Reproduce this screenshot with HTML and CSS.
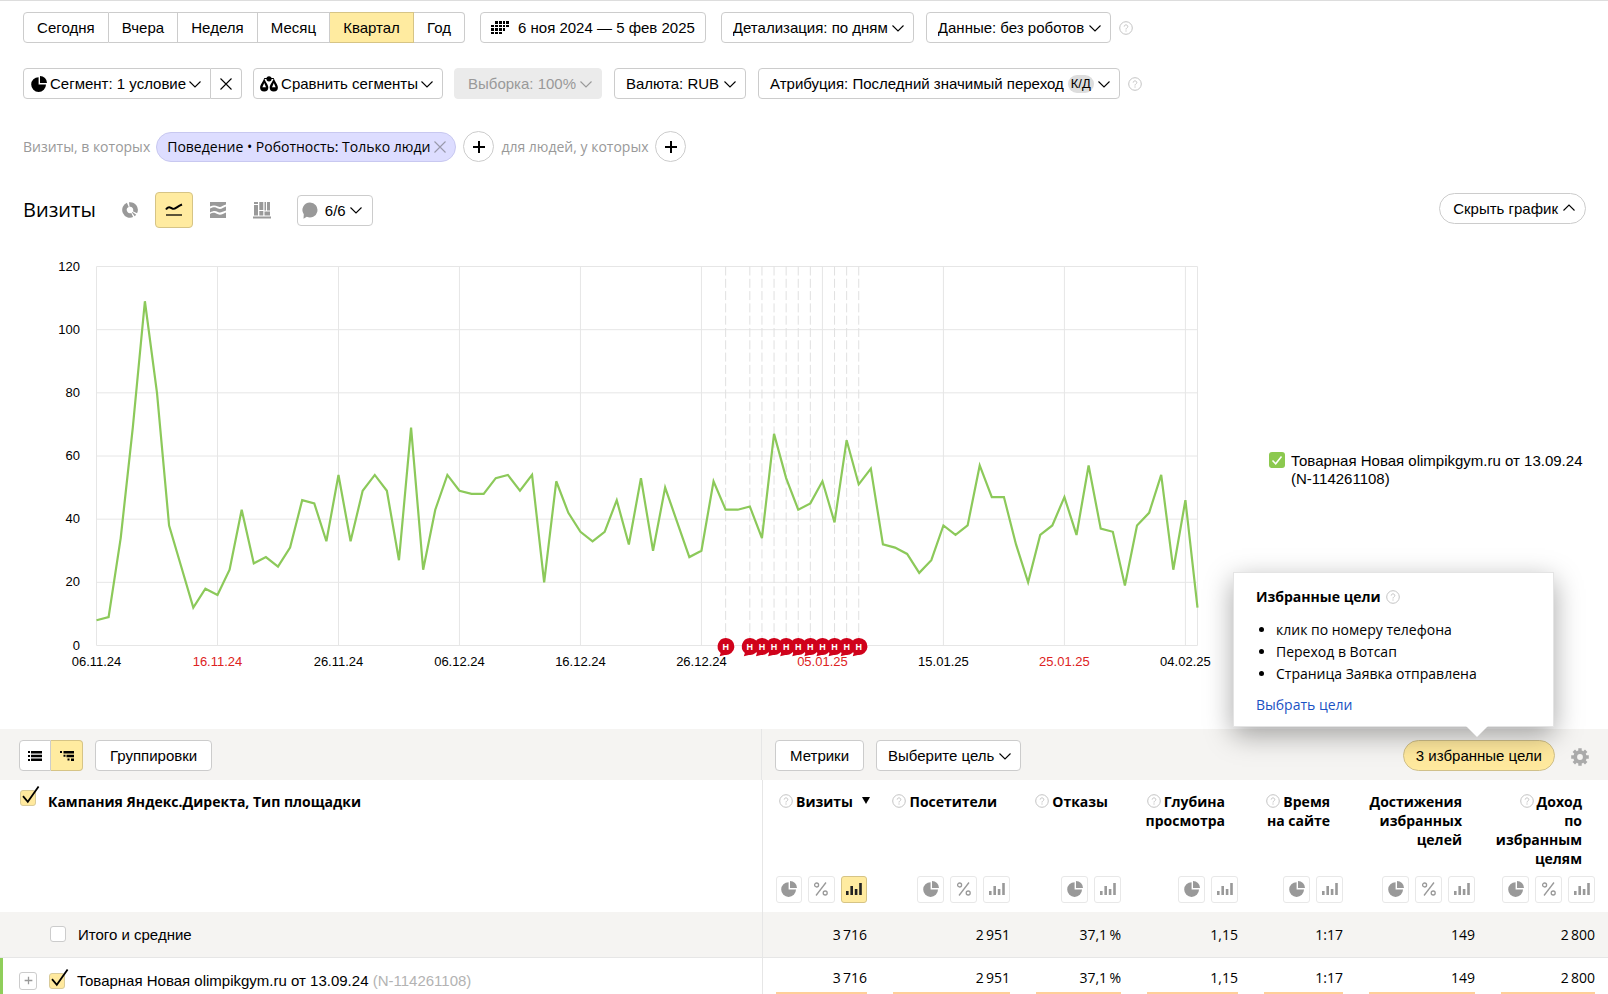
FILE: index.html
```
<!DOCTYPE html>
<html lang="ru">
<head>
<meta charset="utf-8">
<title>Визиты</title>
<link rel="stylesheet" href="styles.css">
</head>
<body>
<svg class="sprite" aria-hidden="true">
  <symbol id="i-down" viewBox="0 0 12 12"><path d="M.5 3.500 6 9 11.500 3.500" fill="none" stroke="currentColor" stroke-width="1.100"/></symbol>
  <symbol id="i-up" viewBox="0 0 12 12"><path d="M.5 8.500 6 3 11.500 8.500" fill="none" stroke="currentColor" stroke-width="1.100"/></symbol>
  <symbol id="i-x" viewBox="0 0 12 12"><path d="M.5.5l11 11M11.5.5l-11 11" fill="none" stroke="currentColor" stroke-width="1.1"/></symbol>
  <symbol id="i-help" viewBox="0 0 14 14"><circle cx="7" cy="7" r="6.3" fill="none" stroke="currentColor"/><path d="M5.2 5.6c0-2.3 3.6-2.2 3.6 0 0 1.3-1.8 1.3-1.8 2.9M7 9.4v1.2" fill="none" stroke="currentColor"/></symbol>
  <symbol id="i-pie" viewBox="0 0 16 16"><path d="M7.600 1.2V8.600H15A7.400 7.400 0 1 1 7.600 1.2z" fill="currentColor"/><path d="M9 0a7 7 0 0 1 7 7H9z" fill="currentColor"/></symbol>
  <symbol id="i-percent" viewBox="0 0 16 16"><g fill="none" stroke="currentColor" stroke-width="1.3"><path d="M13 1.5l-10 13"/><circle cx="3.6" cy="4" r="2"/><circle cx="12.2" cy="12" r="2"/></g></symbol>
  <symbol id="i-bars" viewBox="0 0 18 14"><path d="M1 9h2.6v4H1zM5.4 4H8v9H5.4zM9.8 7h2.6v6H9.8zM14.2 1h2.6v12h-2.6z" fill="currentColor"/></symbol>
  <symbol id="i-tick" viewBox="0 0 16 16"><path d="M3 6.2 7.8 11.8 18.6-3.4" fill="none" stroke="#000" stroke-width="1.8"/></symbol>
  <symbol id="i-plus" viewBox="0 0 14 14"><path d="M7 1v12M1 7h12" fill="none" stroke="currentColor" stroke-width="2"/></symbol>
</svg>

<header class="filters">
  <div class="row">
    <div class="group period">
      <button>Сегодня</button><button>Вчера</button><button>Неделя</button><button>Месяц</button><button class="on">Квартал</button><button>Год</button>
    </div>
    <button class="btn date">
      <svg width="18" height="14" viewBox="0 0 18 14"><path d="M4 0h3v3H4zM8 0h3v3H8zM12 0h2v3h-2zM15 0h3v3h-3zM0 4h3v2H0zM4 4h3v2H4zM8 4h3v2H8zM12 4h2v2h-2zM15 4h3v2h-3zM0 7h3v3H0zM4 7h3v3H4zM8 7h3v3H8zM12 7h2v3h-2zM0 11h3v2H0zM4 11h3v2H4zM8 11h3v2H8z"/></svg>
      6 ноя 2024 — 5 фев 2025
    </button>
    <div class="pair">
      <span class="select detail"><select aria-label="Детализация"><option>Детализация: по дням</option></select><svg><use href="#i-down"/></svg></span>
      <span class="select robots"><select aria-label="Данные"><option>Данные: без роботов</option></select><svg><use href="#i-down"/></svg></span>
    </div>
    <svg class="help"><use href="#i-help"/></svg>
  </div>

  <div class="row second">
    <div class="group segment">
      <button><svg class="i16"><use href="#i-pie"/></svg><span>Сегмент: 1 условие</span><svg class="i12"><use href="#i-down"/></svg></button>
      <button aria-label="Сбросить"><svg class="i12"><use href="#i-x"/></svg></button>
    </div>
    <button class="btn compare">
      <svg width="18" height="16" viewBox="0 0 18 16"><circle cx="9" cy="2.800" r="2.600"/><path d="M4.200 2.500h9.600" stroke="#000"/><path fill-rule="evenodd" d="M4.200 2C5 5.500 8.300 8.500 8.300 11.500a4.100 4.100 0 0 1-8.200 0C.1 8.500 3.400 5.500 4.200 2zm0 5L2.400 11.200h3.600zM13.800 2c.8 3.500 4.100 6.500 4.100 9.500a4.100 4.100 0 0 1-8.200 0C9.700 8.500 13 5.500 13.800 2zm0 5L12 11.200h3.600z"/></svg>
      <span>Сравнить сегменты</span><svg class="i12"><use href="#i-down"/></svg>
    </button>
    <span class="select sample"><select aria-label="Выборка" disabled><option>Выборка: 100%</option></select><svg><use href="#i-down"/></svg></span>
    <span class="select currency"><select aria-label="Валюта"><option>Валюта: RUB</option></select><svg><use href="#i-down"/></svg></span>
    <button class="btn attribution"><span>Атрибуция: Последний значимый переход</span><span class="tag">К/Д</span><svg class="i12"><use href="#i-down"/></svg></button>
    <svg class="help"><use href="#i-help"/></svg>
  </div>

  <div class="row third">
    <span class="muted first">Визиты, в которых</span>
    <span class="chip">Поведение • Роботность: Только люди <button aria-label="Убрать"><svg class="i12"><use href="#i-x"/></svg></button></span>
    <button class="round" aria-label="Добавить условие"><svg><use href="#i-plus"/></svg></button>
    <span class="muted">для людей, у которых</span>
    <button class="round" aria-label="Добавить условие для людей"><svg><use href="#i-plus"/></svg></button>
  </div>
</header>

<section class="titlebar">
  <h1>Визиты</h1>
  <div class="views">
    <button aria-label="Круговая"><svg width="16" height="16" viewBox="0 0 16 16"><g fill="none" stroke="#999" stroke-width="4.600"><path d="M5.800 2.900A5.500 5.500 0 0 0 10.200 13"/><path d="M7.300 2.500A5.500 5.500 0 0 1 13 10.300"/><path d="M11.300 12.400A5.500 5.500 0 0 0 12.400 11.300"/></g></svg></button>
    <button class="on" aria-label="Линии"><svg width="18" height="14" viewBox="0 0 18 14"><path d="M1 6.500C3 3 5 4 8 5.800 10 6.500 12 3.500 17 1.500" fill="none" stroke="#000" stroke-width="2"/><path d="M1 12h16" stroke="#000" stroke-width="1.300"/></svg></button>
    <button aria-label="Области"><svg width="16" height="16" viewBox="0 0 16 16"><path d="M0 0h16v2.500C12 3.500 11 6 8 4.500 5 3 3 3 0 4.500zM0 6.500c4-2 5-1.500 8 0 3 1.300 5-.8 8-2v4c-4 1-5 3-8 1.500s-5-1-8 .5zM0 12c4-2 5-1 8 .3 3 1.200 5-.8 8-1.800V16H0z" fill="#999"/></svg></button>
    <button aria-label="Столбцы"><svg width="18" height="18" viewBox="0 0 18 18"><path d="M0 15.500h18v2H0zM1 1h4v2H1zM1 4h4v10.500H1zM6.300 1h4v8h-4zM6.300 10h4v4.500h-4zM11.500 1h1.500v8.500h-1.500zM11.500 10.500h5.500v4h-5.500zM14 1h3v8.500h-3z" fill="#999"/></svg></button>
  </div>
  <button class="btn notes"><svg width="16" height="17" viewBox="0 0 16 17"><path d="M8 .5a7.500 7.500 0 1 1-3.200 14.300L1.500 16.800l.3-4.500A7.500 7.500 0 0 1 8 .5z" fill="#999"/></svg><span>6/6</span><svg class="i12"><use href="#i-down"/></svg></button>
  <button class="btn hide">Скрыть график <svg class="i12"><use href="#i-up"/></svg></button>
</section>

<section class="chart">
  <svg id="plot" viewBox="0 0 1232 456" role="img" aria-label="График визитов"></svg>
  <label class="legend">
    <span class="green"><input type="checkbox" checked><svg viewBox="0 0 16 16"><path d="M3.500 8.500l3.200 3.300L12.500 4.500" fill="none" stroke="#fff" stroke-width="1.500"/></svg></span>
    <span>Товарная Новая olimpikgym.ru от 13.09.24<br>(N-114261108)</span>
  </label>
</section>

<section class="report">
  <div class="toolbar">
    <div class="tools-left">
      <div class="group tree">
        <button aria-label="Список"><svg width="14" height="10" viewBox="0 0 14 10"><path d="M0 0h2v2H0zM0 4h2v2H0zM0 8h2v2H0zM3 0h11v2.500H3zM3 3.700h11v2.500H3zM3 7.500h11V10H3z"/></svg></button>
        <button class="on" aria-label="Дерево"><svg width="14" height="10" viewBox="0 0 14 10"><path d="M0 0h2v2H0zM3.500 0H14v2.500H3.500zM3.500 3.700h2v2h-2zM6.500 3.700H14v2.500H6.500zM7.500 7.500h2v2h-2zM11 7.500h3V10h-3z"/></svg></button>
      </div>
      <button class="btn text">Группировки</button>
    </div>
    <div class="tools-right">
      <button class="btn text">Метрики</button>
      <span class="select goal"><select aria-label="Цель"><option>Выберите цель</option></select><svg><use href="#i-down"/></svg></span>
      <div class="goals">
        <button class="btn goals-btn">3 избранные цели</button>
        <div class="popover">
          <h2>Избранные цели <svg class="help"><use href="#i-help"/></svg></h2>
          <ul><li>клик по номеру телефона</li><li>Переход в Вотсап</li><li>Страница Заявка отправлена</li></ul>
          <a href="#">Выбрать цели</a>
        </div>
      </div>
      <button class="gear" aria-label="Настройки"><svg width="18" height="18" viewBox="0 0 18 18"><circle cx="9" cy="9" r="4.800" fill="none" stroke="#aaa" stroke-width="3.800"/><path d="M9 .2v3M9 14.800v3M.2 9h3M14.800 9h3M2.800 2.800l2 2M13.200 13.200l2 2M2.800 15.200l2-2M13.200 4.800l2-2" stroke="#aaa" stroke-width="3.400"/></svg></button>
    </div>
  </div>

  <table>
    <colgroup><col><col class="c118"><col class="c143"><col class="c111"><col class="c117"><col class="c105"><col class="c132"><col class="c120"></colgroup>
    <thead>
      <tr class="names">
        <th rowspan="2" class="dim"><div class="namecell"><span class="check"><input type="checkbox" checked aria-label="Выбрать все"><svg><use href="#i-tick"/></svg></span>Кампания Яндекс.Директа, Тип площадки</div></th>
        <th class="sorted"><svg class="help"><use href="#i-help"/></svg>Визиты<span class="arrow"></span></th>
        <th><svg class="help"><use href="#i-help"/></svg>Посетители</th>
        <th><svg class="help"><use href="#i-help"/></svg>Отказы</th>
        <th><svg class="help"><use href="#i-help"/></svg>Глубина<br>просмотра</th>
        <th><svg class="help"><use href="#i-help"/></svg>Время<br>на сайте</th>
        <th>Достижения<br>избранных<br>целей</th>
        <th><svg class="help"><use href="#i-help"/></svg>Доход<br>по<br>избранным<br>целям</th>
      </tr>
      <tr class="modes">
        <td><div><button aria-label="Круг"><svg class="i16"><use href="#i-pie"/></svg></button><button aria-label="Проценты"><svg class="i16"><use href="#i-percent"/></svg></button><button class="on" aria-label="Столбцы"><svg class="i18"><use href="#i-bars"/></svg></button></div></td>
        <td><div><button aria-label="Круг"><svg class="i16"><use href="#i-pie"/></svg></button><button aria-label="Проценты"><svg class="i16"><use href="#i-percent"/></svg></button><button aria-label="Столбцы"><svg class="i18"><use href="#i-bars"/></svg></button></div></td>
        <td><div><button aria-label="Круг"><svg class="i16"><use href="#i-pie"/></svg></button><button aria-label="Столбцы"><svg class="i18"><use href="#i-bars"/></svg></button></div></td>
        <td><div><button aria-label="Круг"><svg class="i16"><use href="#i-pie"/></svg></button><button aria-label="Столбцы"><svg class="i18"><use href="#i-bars"/></svg></button></div></td>
        <td><div><button aria-label="Круг"><svg class="i16"><use href="#i-pie"/></svg></button><button aria-label="Столбцы"><svg class="i18"><use href="#i-bars"/></svg></button></div></td>
        <td><div><button aria-label="Круг"><svg class="i16"><use href="#i-pie"/></svg></button><button aria-label="Проценты"><svg class="i16"><use href="#i-percent"/></svg></button><button aria-label="Столбцы"><svg class="i18"><use href="#i-bars"/></svg></button></div></td>
        <td><div><button aria-label="Круг"><svg class="i16"><use href="#i-pie"/></svg></button><button aria-label="Проценты"><svg class="i16"><use href="#i-percent"/></svg></button><button aria-label="Столбцы"><svg class="i18"><use href="#i-bars"/></svg></button></div></td>
      </tr>
    </thead>
    <tbody>
      <tr class="total">
        <td class="dim"><label class="namecell indent"><span class="check"><input type="checkbox"></span>Итого и средние</label></td>
        <td>3&#8201;716</td><td>2&#8201;951</td><td>37,1&#8201;%</td><td>1,15</td><td>1:17</td><td>149</td><td>2&#8201;800</td>
      </tr>
      <tr class="item">
        <td class="dim"><div class="namecell"><button class="expand" aria-label="Развернуть"><svg><use href="#i-plus"/></svg></button><label class="namelabel"><span class="check"><input type="checkbox" checked><svg><use href="#i-tick"/></svg></span><span>Товарная Новая olimpikgym.ru от 13.09.24 <span class="id">(N-114261108)</span></span></label></div></td>
        <td><div>3&#8201;716</div></td><td><div>2&#8201;951</div></td><td><div>37,1&#8201;%</div></td><td><div>1,15</div></td><td><div>1:17</div></td><td><div>149</div></td><td><div>2&#8201;800</div></td>
      </tr>
    </tbody>
  </table>
</section>
<script src="chart.js"></script>
</body>
</html>
```
FILE: styles.css
```
* { box-sizing: border-box; }
body { margin: 0; background: #fff; color: #000; font: 14px/19px "Open Sans", "Noto Sans", sans-serif; border-top: 1px solid #ddd; }
.sprite { display: none; }
svg { display: block; flex: none; }
button, select { font: 15px/19px "Liberation Sans", Arial, sans-serif; color: #000; cursor: pointer; white-space: nowrap; }
button { padding: 0; border: 0; background: none; }
.i12, .select > svg { width: 12px; height: 12px; }
.i16 { width: 16px; height: 16px; }
.i18 { width: 18px; height: 14px; }
.help { width: 14px; height: 14px; color: #c4c4c4; }
.on { background: #ffeba0 !important; }

.filters { padding: 11px 23px 0; }
.row { display: flex; align-items: center; height: 31px; }
.second { margin-top: 25px; }
.third { margin-top: 32px; }
.btn, .select { height: 31px; border: 1px solid #ccc; border-radius: 4px; background: #fff; display: flex; align-items: center; }
.group { display: flex; height: 31px; }
.group button { display: flex; align-items: center; justify-content: center; border: 1px solid #ccc; background: #fff; }
.group button + button { border-left: 0; }
.group button:first-child { border-radius: 4px 0 0 4px; }
.group button:last-child { border-radius: 0 4px 4px 0; }
.group .on { border-color: #d6c486; }
.period { width: 442px; }
.period button { flex: 1 1 auto; padding: 0 12px; }
.date { margin-left: 15px; padding: 0 10px; gap: 9px; }
.pair { display: flex; gap: 12px; margin: 0 8px 0 15px; }
.select { display: grid; grid-template-columns: 1fr; align-items: center; }
.select select { grid-area: 1 / 1; appearance: none; height: 29px; width: 100%; border: 0; background: none; padding: 0 25px 0 11px; }
.select > svg { grid-area: 1 / 1; justify-self: end; margin-right: 9px; pointer-events: none; }
.segment button:first-child { padding: 0 9px 0 7px; gap: 3px; }
.segment button:last-child { width: 31px; }
.compare { margin: 0 11px; padding: 0 9px 0 6px; gap: 3px; }
.sample { margin-right: 12px; border-color: #ebebeb; background: #ebebeb; color: #999; }
.sample select { padding-left: 13px; color: #999; opacity: 1; }
.currency { margin-right: 12px; }
.attribution { margin-right: 8px; padding: 0 9px 0 11px; gap: 4px; }
.tag { padding: 0 3px; border-radius: 9px; background: #ddd; font-size: 13px; line-height: 18px; }
.muted { color: #999; margin: 0 7px; }
.muted.first { margin: 0 6px 0 0; }
.chip { display: flex; align-items: center; gap: 4px; height: 30px; padding: 0 9px 0 10px; border: 1px solid #c8c8f0; border-radius: 15px; background: #ddf; white-space: nowrap; }
.chip button { color: #99a; }
.chip + .round { margin-left: 7px; }
.round { display: grid; place-items: center; width: 31px; height: 31px; border: 1px solid #ccc; border-radius: 50%; }
.round svg { width: 14px; height: 14px; }

.titlebar { display: flex; align-items: center; height: 36px; margin: 30px 22px 14px 23px; }
h1 { margin: 0 15px 0 0; font-size: 20px; line-height: 28px; font-weight: 500; }
.views { display: flex; gap: 6px; }
.views button { display: grid; place-items: center; width: 38px; height: 36px; border-radius: 4px; }
.views .on { border: 1px solid #d6c486; }
.notes { margin-left: 16px; padding: 0 10px 0 4px; gap: 4px; }
.notes span { margin-left: 3px; }
.hide { margin: 0 0 4px auto; padding: 0 10px 0 13px; gap: 5px; border-radius: 16px; }

.chart { display: flex; align-items: center; margin-bottom: 31px; }
.chart > svg { flex: 1; min-width: 0; height: auto; }
.chart text { font: 13px "Liberation Sans", Arial, sans-serif; }
.legend { display: flex; gap: 6px; width: 376px; padding-left: 37px; font: 15px/18px "Liberation Sans", Arial, sans-serif; }
.green { display: grid; width: 16px; height: 16px; }
.green input { grid-area: 1 / 1; appearance: none; margin: 0; width: 16px; height: 16px; border-radius: 3px; background: #8cc94f; }
.green svg { grid-area: 1 / 1; width: 16px; height: 16px; pointer-events: none; z-index: 1; }

.toolbar { display: flex; background: #f5f4f2; height: 51px; }
.tools-left, .tools-right { display: flex; align-items: center; padding: 2px 13px 0; gap: 12px; }
.tools-left { flex: 1; padding-left: 19px; border-right: 1px solid #e6e6e6; }
.tools-right { width: 846px; }
.tree button { width: 32px; }
.text { padding: 0 14px; }
.goals { position: relative; margin-left: auto; }
.goals-btn { padding: 0 12px; border-radius: 16px; background: #ffe99e; border-color: #d0c08a; }
.gear { margin: 3px 6px 0 4px; }
.popover { position: absolute; right: 1px; bottom: 44px; width: 321px; padding: 14px 22px 10px; background: #fff; border: 1px solid #e4e4e4; box-shadow: 0 8px 26px rgba(0,0,0,.35); white-space: nowrap; }
.popover::after { content: ""; position: absolute; right: 65px; bottom: -11px; border: 11px solid transparent; border-top-color: #fff; border-bottom: 0; }
.popover h2 { display: flex; align-items: center; gap: 5px; margin: 0 0 12px; font-size: 14px; line-height: 20px; }
.popover ul { margin: 0 0 9px; padding: 0 0 0 20px; line-height: 22px; }
.popover a { color: #1a52c4; text-decoration: none; line-height: 22px; }

table { width: 100%; table-layout: fixed; border-collapse: collapse; }
.c118 { width: 118px; } .c143 { width: 143px; } .c111 { width: 111px; } .c117 { width: 117px; } .c105 { width: 105px; } .c132 { width: 132px; } .c120 { width: 120px; }
th, td { padding: 0 13px; text-align: right; }
th { padding: 12px 26px 0 0; vertical-align: top; white-space: nowrap; font-weight: 700; }
th .help { display: inline-block; margin-right: 3px; vertical-align: -1px; }
.names { height: 91px; }
.arrow { display: inline-block; margin: 0 -16px 3px 9px; border: 4px solid transparent; border-top: 7px solid #000; border-bottom: 0; }
.dim { text-align: left; border-right: 1px solid #e6e6e6; padding: 0 0 0 20px; }
th.dim { padding-top: 10px; }
.namecell, .namelabel { display: flex; align-items: center; gap: 12px; }
th .check { margin-bottom: 6px; }
.check { display: grid; width: 16px; height: 16px; }
.check input { grid-area: 1 / 1; appearance: none; margin: 0; width: 16px; height: 16px; border: 1px solid #ccc; border-radius: 3px; background: #fff; }
.check input:checked { background: #ffe99e; border-color: #d9cb9a; }
.check svg { grid-area: 1 / 1; width: 16px; height: 16px; overflow: visible; pointer-events: none; z-index: 1; }
.check use, .check symbol, #i-tick { overflow: visible; }
.modes { height: 41px; }
.modes td { padding-bottom: 5px; vertical-align: middle; }
.modes div { display: flex; justify-content: flex-end; gap: 6px; }
.modes button { display: grid; place-items: center; width: 27px; height: 27px; border: 1px solid #e8e8e8; border-radius: 3px; color: #999; }
.modes .on { border-color: #d6c486; color: #222; }
tbody .dim { font: 15px/19px "Liberation Sans", Arial, sans-serif; }
.total { height: 45px; background: #f5f4f2; border-bottom: 1px solid #e6e6e6; }
.indent { padding-left: 30px; }
.item { height: 37px; }
.item td { vertical-align: bottom; }
.item td.dim { padding: 0 0 4px 19px; box-shadow: inset 3px 0 #8fce5a; }
.item td > div:not(.namecell) { height: 31px; border-bottom: 2px solid #ffcf99; line-height: 29px; }
.expand { display: grid; place-items: center; width: 18px; height: 18px; border: 1px solid #ccc; border-radius: 3px; color: #999; }
.expand svg { width: 9px; height: 9px; }
.id { color: #b3b3b3; }
```
FILE: chart.js
```
const visits = [8,9,34,69,109,80,38,25,12,18,16,24,43,26,28,25,31,46,45,33,54,33,49,54,49,27,69,24,43,54,49,48,48,53,54,49,54,20,52,42,36,33,36,46,32,53,30,50,39,28,30,52,43,43,44,34,67,53,43,45,52,39,65,51,56,32,31,29,23,27,38,35,38,57,47,47,32,20,35,38,47,35,57,37,36,19,38,42,54,24,46,12];
const days = ['06.11.24','16.11.24','26.11.24','06.12.24','16.12.24','26.12.24','05.01.25','15.01.25','25.01.25','04.02.25'];
const weekends = [1, 6, 8];
const holidays = [52,54,55,56,57,58,59,60,61,62,63];
const box = { left: 96.5, right: 1197.5, top: 24.5, bottom: 403.5 };
const x = d => box.left + (box.right - box.left) * d / 91;
const y = v => box.bottom - (box.bottom - box.top) * v / 120;
let out = '';
for (let v = 0; v <= 120; v += 20) {
  out += `<path d="M${box.left} ${y(v)}H${box.right}" stroke="#e6e6e6"/>`;
  out += `<text x="80" y="${y(v) + 4}" text-anchor="end">${v}</text>`;
}
days.forEach((t, i) => {
  out += `<path d="M${x(i * 10)} ${box.top}V${box.bottom}" stroke="#e6e6e6"/>`;
  out += `<text x="${x(i * 10)}" y="424" text-anchor="middle" fill="${weekends.includes(i) ? '#d22' : '#000'}">${t}</text>`;
});
out += `<path d="M${box.right} ${box.top}V${box.bottom}" stroke="#e6e6e6"/>`;
holidays.filter(d => d !== 60).forEach(d => {
  out += `<path d="M${x(d)} ${box.top}V${box.bottom}" stroke="#e0e0e0" stroke-dasharray="9 3.3"/>`;
});
out += `<polyline points="${visits.map((v, d) => x(d) + ',' + y(v)).join(' ')}" fill="none" stroke="#8cc95a" stroke-width="2.2"/>`;
holidays.forEach(d => {
  out += `<g transform="translate(${x(d)} 404.5)"><path d="M0-8.500A8.500 8.500 0 1 1-1 8.400L-6 9.800-5 6.500A8.500 8.500 0 0 1 0-8.500z" fill="#d0021b"/><text y="3.500" text-anchor="middle" fill="#fff" style="font-size:9px;font-weight:700">Н</text></g>`;
});
document.getElementById('plot').innerHTML = out;
```
